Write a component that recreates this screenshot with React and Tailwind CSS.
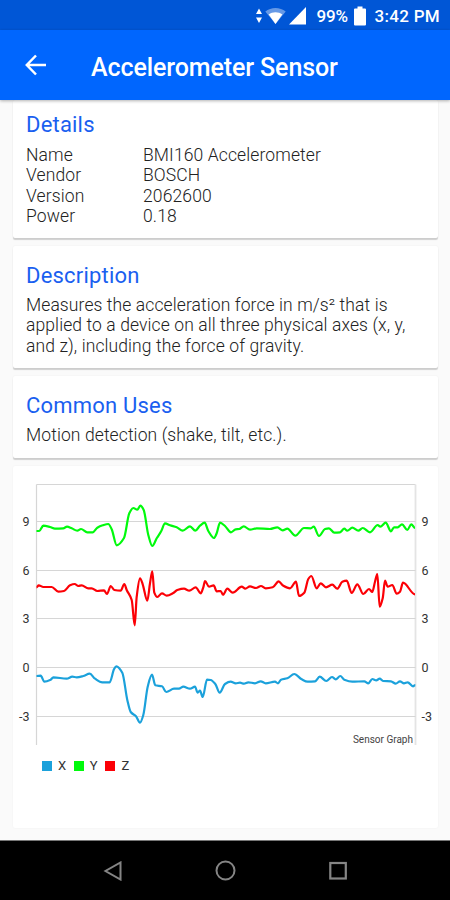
import React from 'react';

const DETAILS = [
  { label: 'Name', value: 'BMI160 Accelerometer' },
  { label: 'Vendor', value: 'BOSCH' },
  { label: 'Version', value: '2062600' },
  { label: 'Power', value: '0.18' },
];

const TICKS = [
  { label: '9', y: 37.5 },
  { label: '6', y: 86.5 },
  { label: '3', y: 134.5 },
  { label: '0', y: 183.5 },
  { label: '-3', y: 232.5 },
];

const SERIES = [
  {
    name: 'X',
    color: '#1ba1db',
    points:
      '0.5,192 4.7,191.7 8.3,197.7 14.7,195.7 17.3,193.3 30.7,194.7 36.3,192.7 40.7,193.3 47.3,192 53.7,189.7 59,194.7 66.3,198.3 73.7,198.3 78,185.3 80.3,182.3 86.3,188.7 91.3,216 94.7,228 100,232.3 104,238.7 107.3,231 111.7,202.7 116,190.7 119.3,201.3 126,202.3 130.3,208 138,204.7 143,204.7 147.3,202.7 154,204.7 159,202.7 161.7,208.7 164,206.7 166.7,213 171,195.7 174.7,196 179.3,200 183.7,208.7 189,200 194.7,197.7 199.7,199.3 204,198.7 208,199.7 212.3,198.3 219,199.3 224.7,197.3 229.7,199.3 239,197.7 242,199.3 245,195.7 251.3,194.3 258.3,190 265.7,195.3 271.7,197.7 279,197.3 283.7,192.7 290.3,197 296,193 299.7,195.3 304.3,192 308.3,195.7 316.3,197.7 328.3,197.3 332.3,199.3 336.3,195 340.3,196.3 343.7,194.7 347,197 355,197.3 359.7,199.7 364,197.3 368,199.3 371.7,198.3 377,202.3 379.3,201',
  },
  {
    name: 'Y',
    color: '#00fa0c',
    points:
      '0.5,47 3.3,47 7.3,41.7 14,43 19,44.7 27.3,44.3 31,42.7 35.7,44.3 41.3,46.7 45,45 51.3,48.3 56.7,48.3 61.3,43.7 66.7,41.3 72.3,40 75.7,45.3 80.7,61.3 88,54 93.3,29.3 97.3,24 101.3,25.7 104.3,21.7 107.7,26 112.3,51 116.3,62 120.7,54.3 125.3,47 129,39.3 134,41.3 140.7,43.3 146.7,46.7 154,42.3 159.3,46.7 164,41.7 168.7,38.7 172.3,47 178,54 180.7,49.3 184,38.7 189,42 195,48.3 199.7,45.3 203.3,45 207.7,42.3 214,45.7 220.7,44.3 234,45 241.3,43.3 246.7,46.3 251.3,44.7 259.3,51.7 268,44 274.7,44.3 277.7,42.7 283,52 289,45 293,44.3 298.3,48.7 304,48.3 308.3,44.7 311.3,46.7 316.3,43.7 322.3,46.7 326.7,44 334,48.3 341.7,41 344.3,42.7 349.7,38.7 355,47.3 358,43.3 361.7,43.3 366,40.3 371.3,46 375.3,40.3 379,44',
  },
  {
    name: 'Z',
    color: '#fc0006',
    points:
      '0.5,103.3 2.7,101.3 7.3,103 15.7,103 22.3,107.7 28,107 34,101.3 38.7,100 42.3,102 45.7,101.3 52.3,104.3 55.7,104.3 61.3,107 68,106.3 71,110 74.7,102 78.3,106 84.7,106.7 88.3,100 90.7,106 95.7,116 98.7,141.3 100.7,112.7 104,94.3 106.7,100.3 111.3,116.7 114,99.3 116.3,87.3 118.3,108.7 121.3,113 126,109.3 130.7,111.7 137.3,109 141.3,106 148,104.7 153.3,106.7 159.7,103.3 164.7,109.3 167.3,103.3 169,97 173,102.7 177.7,101.3 180.7,107.3 184.7,107 187,110.7 191.3,104.7 196.7,108.7 205.7,102.7 209.3,104.7 214,102.3 220,104 225,102 229.7,104.3 236.7,103.3 242.7,97.3 246.7,101.3 254,104.3 260,97.7 263,112 268.3,108.7 272.3,95 275.3,92 280.7,104.3 284.7,99.3 290,103.3 296.3,100.7 301.3,104.7 306.3,97.7 310.7,96.7 315.7,109 321.3,100.3 327.3,110 333,105 336.3,108 339,97.7 341.3,90 343.7,122.7 346.7,114.3 349,96.7 351.7,102.7 356.3,101 360.7,109.7 364,107.7 367,98.7 379,110.3',
  },
];

// Turns "x,y x,y" into a curve whose handles are horizontal at every peak and dip
const smoothPath = (points) => {
  const pts = points.split(' ').map((p) => p.split(',').map(Number));
  const slope = (a, b) => (b[1] - a[1]) / (b[0] - a[0]);
  const tangents = pts.map((p, i) => {
    if (i === 0 || i === pts.length - 1) return 0;
    const before = slope(pts[i - 1], p);
    const after = slope(p, pts[i + 1]);
    return before * after <= 0 ? 0 : (2 * before * after) / (before + after);
  });
  return pts.slice(1).reduce((d, [x, y], i) => {
    const [px, py] = pts[i];
    const h = (x - px) / 3;
    return `${d}C${px + h} ${py + tangents[i] * h} ${x - h} ${y - tangents[i + 1] * h} ${x} ${y}`;
  }, `M${pts[0][0]} ${pts[0][1]}`);
};

const StatusBar = () => (
  <div className="flex h-[30px] shrink-0 items-center justify-end bg-[#0056d6] pr-[10px] pt-[2px] text-white">
    {/* Data activity */}
    <svg className="h-4 w-2" viewBox="0 0 8 16" fill="currentColor">
      <path d="M4 0.5L7 6H1zM4 15L1 9.5h6z" />
    </svg>
    {/* Wifi */}
    <svg className="ml-[2px] h-[18px] w-[21px]" viewBox="0 0 21 18" fill="currentColor">
      <path d="M0.3 4.5C6 -0.2 15 -0.2 20.7 4.5L10.5 17z" opacity="0.4" />
      <path d="M3.7 7.6C7.5 4.6 13.5 4.6 17.3 7.6L10.5 17z" />
    </svg>
    {/* Cell signal */}
    <svg className="ml-[3px] h-[18px] w-[17px]" viewBox="0 0 18 18" preserveAspectRatio="none" fill="currentColor">
      <path d="M18 0V17.5H0z" />
    </svg>
    <span className="ml-[10px] w-[33px] whitespace-nowrap text-[17px] font-medium leading-none tracking-[-0.2px]">99%</span>
    {/* Battery */}
    <svg className="ml-[5px] h-5 w-3" viewBox="0 0 12 20" fill="currentColor">
      <path d="M3.5 0.5h5v2H11a1 1 0 0 1 1 1V18.5a1 1 0 0 1 -1 1H1a1 1 0 0 1 -1 -1V3.5a1 1 0 0 1 1 -1h2.5z" />
    </svg>
    <span className="ml-[8px] whitespace-nowrap text-[17px] font-medium leading-none tracking-[0.3px]">3:42 PM</span>
  </div>
);

const AppBar = () => (
  <header className="relative z-10 flex h-[70px] shrink-0 items-center bg-[#0066fe] pl-[25px] text-white shadow-[0_1px_3px_rgba(0,0,0,0.3)]">
    <svg className="h-[22px] w-[22px]" viewBox="0 0 22 22" fill="none" stroke="currentColor" strokeWidth="2.5">
      <path d="M11 1.5L1.8 11L11 20.5M2 11H21" />
    </svg>
    <h1 className="ml-[44px] mt-[4px] whitespace-nowrap text-[25px] font-medium leading-none tracking-[-0.1px]">Accelerometer Sensor</h1>
  </header>
);

const Card = ({ title, className, children }) => (
  <section className={`rounded-[2px] bg-white px-[13px] shadow-[0_2px_1px_rgba(0,0,0,0.17),0_0_2px_rgba(0,0,0,0.06)] ${className}`}>
    <h2 className="text-[22px] leading-[26px] tracking-[0.2px] text-[#1a5ff0]">{title}</h2>
    {children}
  </section>
);

const SensorGraph = () => (
  <svg className="block h-[270px] w-[424px]" viewBox="-23 -8 424 270" fontFamily="Roboto, sans-serif">
    <g stroke="#d6d6d6" strokeWidth="1.2">
      <path d="M0.5 0.5H379.5" />
      <path d="M0.5 0.5V261" />
      <path d="M379.5 0.5V261" stroke="#e4e4e4" strokeWidth="1.8" />
      {TICKS.map((tick) => (
        <path key={tick.label} d={`M0.5 ${tick.y}H379.5`} />
      ))}
    </g>
    <g fontSize="12.5" fill="#333">
      {TICKS.map((tick) => (
        <React.Fragment key={tick.label}>
          <text x="-6.5" y={tick.y + 4} textAnchor="end">{tick.label}</text>
          <text x="385.5" y={tick.y + 4}>{tick.label}</text>
        </React.Fragment>
      ))}
    </g>
    {SERIES.map((series) => (
      <path
        key={series.name}
        d={smoothPath(series.points)}
        fill="none"
        stroke={series.color}
        strokeWidth="2.2"
        strokeLinejoin="round"
      />
    ))}
    <text x="377" y="259" textAnchor="end" fontSize="10" fill="#444">Sensor Graph</text>
  </svg>
);

const Legend = () => (
  <div className="ml-[29px] mt-[12px] flex items-center text-[13px] leading-none text-[#333]">
    {SERIES.map((series) => (
      <div key={series.name} className="flex w-[31.7px] items-center gap-[6px] pt-px">
        <span className="h-[10px] w-[10px]" style={{ backgroundColor: series.color }} />
        <span>{series.name}</span>
      </div>
    ))}
  </div>
);

const NavBar = () => (
  <nav className="flex h-[60px] shrink-0 items-center justify-between border-t border-[#777] bg-black pl-[103px] pr-[102px]">
    <svg className="h-5 w-5" viewBox="0 0 20 20" fill="none" stroke="#858585" strokeWidth="2">
      <path d="M17.5 1.5V18.5L2.5 10z" />
    </svg>
    <svg className="h-[22px] w-[22px]" viewBox="0 0 22 22" fill="none" stroke="#858585" strokeWidth="2">
      <circle cx="10.5" cy="10.5" r="9" />
    </svg>
    <svg className="h-5 w-5" viewBox="0 0 20 20" fill="none" stroke="#858585" strokeWidth="2.2">
      <rect x="2.3" y="2" width="15.5" height="15.5" />
    </svg>
  </nav>
);

const App = () => {
  return (
    <div className="flex h-[900px] w-[450px] flex-col overflow-hidden bg-[#fafafa] font-['Roboto',sans-serif]">
      <StatusBar />
      <AppBar />

      <main className="flex min-h-0 flex-1 flex-col gap-[8px] overflow-hidden pl-[13px] pr-[12px]">
        <Card title="Details" className="h-[138px] shrink-0 pt-[12px]">
          <dl className="mt-[7px] text-[17.5px] font-light leading-[20.4px] tracking-[0.12px] text-[#222]">
            {DETAILS.map((row) => (
              <div key={row.label} className="flex">
                <dt className="w-[117px]">{row.label}</dt>
                <dd>{row.value}</dd>
              </div>
            ))}
          </dl>
        </Card>

        <Card title="Description" className="h-[122px] shrink-0 pt-[17px]">
          <p className="mt-[6px] whitespace-nowrap text-[17.5px] font-light leading-[20.4px] tracking-[0.1px] text-[#222]">
            Measures the acceleration force in m/s² that is
            <br />
            applied to a device on all three physical axes (x, y,
            <br />
            and z), including the force of gravity.
          </p>
        </Card>

        <Card title="Common Uses" className="h-[82px] shrink-0 pt-[17px]">
          <p className="mt-[6px] text-[17.5px] font-light leading-[20.4px] tracking-[0.1px] text-[#222]">
            Motion detection (shake, tilt, etc.).
          </p>
        </Card>

        <section className="h-[362px] shrink-0 rounded-[2px] bg-white pt-[10px] shadow-[0_0_2px_rgba(0,0,0,0.05)]">
          <SensorGraph />
          <Legend />
        </section>
      </main>

      <NavBar />
    </div>
  );
};

export default App;
